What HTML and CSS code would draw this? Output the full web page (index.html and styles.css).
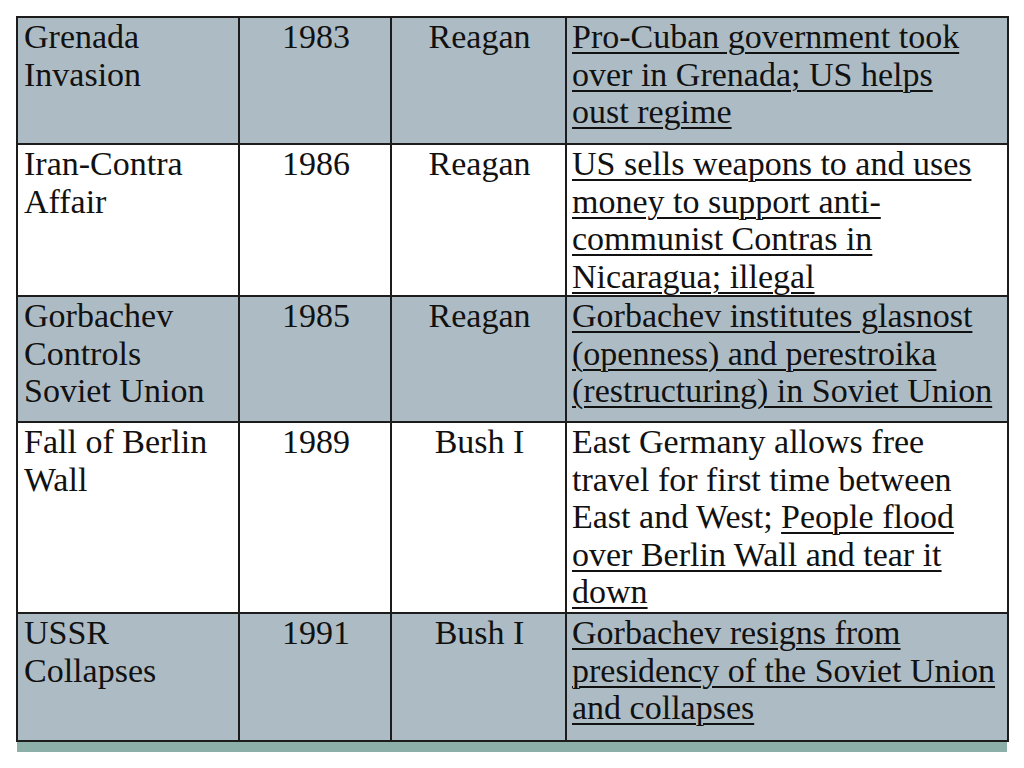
FILE: index.html
```html
<!DOCTYPE html>
<html lang="en">
<head>
<meta charset="utf-8">
<link rel="stylesheet" href="styles.css">
</head>
<body>
<div class="slide">
  <table class="events">
    <colgroup>
      <col class="c-event">
      <col class="c-year">
      <col class="c-pres">
      <col class="c-desc">
    </colgroup>
    <tr class="shade r1">
      <td>Grenada Invasion</td>
      <td class="center">1983</td>
      <td class="center">Reagan</td>
      <td class="desc"><u>Pro-Cuban government took over in Grenada; US helps oust regime</u></td>
    </tr>
    <tr class="r2">
      <td>Iran-Contra Affair</td>
      <td class="center">1986</td>
      <td class="center">Reagan</td>
      <td class="desc"><u>US sells weapons to and uses money to support anti-communist Contras in Nicaragua; illegal</u></td>
    </tr>
    <tr class="shade r3">
      <td>Gorbachev Controls Soviet Union</td>
      <td class="center">1985</td>
      <td class="center">Reagan</td>
      <td class="desc"><u>Gorbachev institutes glasnost (openness) and perestroika (restructuring) in Soviet Union</u></td>
    </tr>
    <tr class="r4">
      <td>Fall of Berlin Wall</td>
      <td class="center">1989</td>
      <td class="center">Bush I</td>
      <td class="desc">East Germany allows free travel for first time between East and West; <u>People flood over Berlin Wall and tear it down</u></td>
    </tr>
    <tr class="shade r5">
      <td>USSR Collapses</td>
      <td class="center">1991</td>
      <td class="center">Bush I</td>
      <td class="desc"><u>Gorbachev resigns from presidency of the Soviet Union and collapses</u></td>
    </tr>
  </table>
  <div class="strip"></div>
</div>
</body>
</html>
```

FILE: styles.css
```css
html, body {
  margin: 0;
  padding: 0;
  background: #ffffff;
}

.slide {
  width: 1024px;
  height: 768px;
  padding: 16px 0 0 16px;
  box-sizing: border-box;
}

.events {
  border-collapse: collapse;
  table-layout: fixed;
  width: 991px;
  font-family: "Liberation Serif", "Times New Roman", serif;
  font-size: 34px;
  line-height: 37.5px;
  color: #111111;
}

.c-event { width: 222px; }
.c-year { width: 152px; }
.c-pres { width: 175px; }
.c-desc { width: 442px; }

.events td {
  border: 2px solid #1c1c1c;
  padding: 0 4px 0 6px;
  vertical-align: top;
  overflow: hidden;
}

.events td.center {
  text-align: center;
}

.events td.desc {
  padding: 0 11px 0 5px;
}

.events u {
  text-decoration-thickness: 2px;
  text-underline-offset: 4px;
}

.shade td {
  background: #adbcc4;
}

.r1 { height: 127px; }
.r2 { height: 152px; }
.r3 { height: 126px; }
.r4 { height: 191px; }
.r5 { height: 128px; }

.strip {
  width: 990px;
  height: 10px;
  margin-left: 1px;
  background: #8cafaa;
}
```
